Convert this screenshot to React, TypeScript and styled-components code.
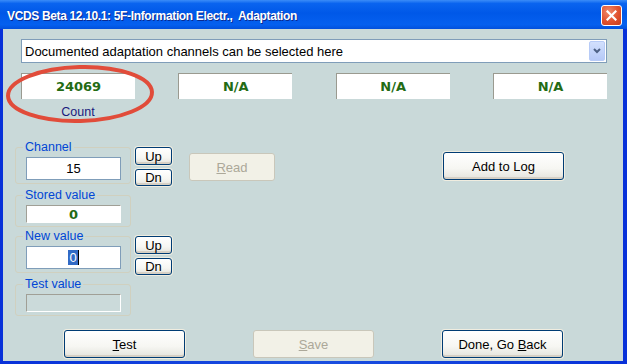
import * as React from "react";
import styled, { createGlobalStyle } from "styled-components";

const GlobalStyle = createGlobalStyle`
  html, body {
    margin: 0;
    padding: 0;
    overflow: hidden;
    background: #ffffff;
  }
`;

const Window = styled.div`
  position: relative;
  width: 627px;
  height: 364px;
  display: flex;
  flex-direction: column;
  background: linear-gradient(to right, #0831d9 0%, #1a4fe0 50%, #0831d9 100%);
  font-family: "Liberation Sans", Arial, sans-serif;
  overflow: hidden;
`;

const TitleBar = styled.div`
  height: 29px;
  flex: 0 0 29px;
  display: flex;
  align-items: center;
  justify-content: space-between;
  padding: 0 5px 0 7px;
  box-sizing: border-box;
  background: linear-gradient(
    to bottom,
    #3b8cf8 0%,
    #0a64ef 12%,
    #0058e8 45%,
    #0560ef 85%,
    #0250dc 100%
  );
`;

const Title = styled.span`
  color: #ffffff;
  font-weight: bold;
  font-size: 12px;
  letter-spacing: -0.35px;
  padding-top: 2px;
  text-shadow: 1px 1px 0 #0b2a8f;
  white-space: pre;
`;

const CloseButton = styled.div`
  width: 21px;
  height: 21px;
  box-sizing: border-box;
  border: 1px solid #ffffff;
  border-radius: 3px;
  background: radial-gradient(circle at 35% 30%, #f08a6c 0%, #e0512e 55%, #c73c1c 100%);
  display: flex;
  align-items: center;
  justify-content: center;
  margin-top: 2px;
`;

const Client = styled.div`
  flex: 1;
  margin: 0 4px 3px 3px;
  background: #c9d9d9;
  display: flex;
  flex-direction: column;
`;

const TopSection = styled.div`
  padding: 10px 16px 0 18px;
`;

const Combo = styled.div`
  height: 24px;
  box-sizing: border-box;
  border: 1px solid #7f9db9;
  background: #ffffff;
  display: flex;
  align-items: center;
  justify-content: space-between;
  padding: 0 1px 0 3px;
  font-size: 13px;
  color: #000000;
`;

const ComboArrow = styled.div`
  width: 16px;
  height: 20px;
  box-sizing: border-box;
  border: 1px solid #b7cbf7;
  border-radius: 2px;
  background: linear-gradient(to bottom, #d2e0fd 0%, #b6c9f7 100%);
  display: flex;
  align-items: center;
  justify-content: center;
`;

const DisplayRow = styled.div`
  display: flex;
  justify-content: space-between;
  margin-top: 10px;
`;

const DisplayCell = styled.div`
  width: 114px;
  display: flex;
  flex-direction: column;
  align-items: center;
`;

const DisplayBox = styled.div`
  width: 100%;
  height: 26px;
  box-sizing: border-box;
  background: #ffffff;
  border-top: 1px solid #9a9a90;
  border-left: 1px solid #9a9a90;
  display: flex;
  align-items: center;
  justify-content: center;
  font-family: "DejaVu Sans", Verdana, sans-serif;
  font-weight: bold;
  font-size: 13px;
  color: #236b14;
`;

const CountLabel = styled.div`
  margin-top: 5px;
  line-height: 16px;
  font-size: 12.5px;
  color: #19197c;
`;

const Controls = styled.div`
  display: flex;
  align-items: flex-start;
  margin-top: 20px;
  padding-left: 12px;
`;

const LeftColumn = styled.div`
  display: flex;
  flex-direction: column;
  gap: 2px;
`;

const GroupRow = styled.div`
  display: flex;
  align-items: flex-start;
`;

const GroupBox = styled.fieldset`
  width: 116px;
  box-sizing: border-box;
  margin: 0;
  padding: 0 8px 3px 10px;
  min-width: 0;
  border: 1px solid #d0d0bf;
  border-radius: 3px;
`;

const Legend = styled.legend`
  margin-left: -3px;
  padding: 0 2px;
  font-size: 12.5px;
  line-height: 14px;
  color: #0046d5;
`;

const Field = styled.div<{ $kind: "edit" | "static" | "disabled"; $tall?: boolean }>`
  margin-top: 3px;
  width: 95px;
  height: ${p => (p.$tall ? 23 : 18)}px;
  box-sizing: border-box;
  display: flex;
  align-items: center;
  justify-content: center;
  font-size: 13px;
  color: #000000;
  background: ${p => (p.$kind === "disabled" ? "#cbdada" : "#ffffff")};
  ${p =>
    p.$kind === "edit"
      ? "border: 1px solid #7f9db9;"
      : `border-top: 1px solid #a09f96;
         border-left: 1px solid #a09f96;
         border-right: 1px solid #ffffff;
         border-bottom: 1px solid #ffffff;`}
`;

const StoredValue = styled.span`
  font-family: "DejaVu Sans", Verdana, sans-serif;
  font-weight: bold;
  font-size: 13px;
  color: #236b14;
`;

const Selected = styled.span`
  background: #316ac5;
  color: #ffffff;
  padding: 0 1px;
  line-height: 15px;
  border-right: 1px solid #000000;
`;

const Stack = styled.div`
  display: flex;
  flex-direction: column;
  gap: 4px;
  margin-left: 4px;
  margin-top: 7px;
`;

const Button = styled.button<{ $w: number; $h: number }>`
  width: ${p => p.$w}px;
  height: ${p => p.$h}px;
  box-sizing: border-box;
  padding: 0;
  font-family: "Liberation Sans", Arial, sans-serif;
  font-size: 13px;
  color: #000000;
  border: 1px solid #003c74;
  border-radius: 3px;
  background: linear-gradient(to bottom, #ffffff 0%, #f6f6f2 60%, #e4e3dc 100%);
  box-shadow: inset 0 -2px 0 #d6d0c5, 0 0 0 1px #f0ede0;
  cursor: default;

  &:disabled {
    color: #aca899;
    border-color: #c9c7ba;
    background: #f2f1e7;
    box-shadow: none;
  }
`;

const ReadButton = styled(Button)`
  margin-left: 17px;
  margin-top: 13px;
`;

const LogButton = styled(Button)`
  margin-left: 168px;
  margin-top: 12px;
`;

const BottomBar = styled.div`
  margin-top: auto;
  display: flex;
  gap: 68px;
  padding: 0 0 3px 61px;
`;

const Ellipse = styled.svg`
  position: absolute;
  left: 5px;
  top: 64px;
  pointer-events: none;
`;

export default function App() {
  return (
    <>
      <GlobalStyle />
      <Window>
        <TitleBar>
          <Title>VCDS Beta 12.10.1: 5F-Information Electr.,  Adaptation</Title>
          <CloseButton>
            <svg width="11" height="11" viewBox="0 0 11 11">
              <path d="M1.5 1.5 L9.5 9.5 M9.5 1.5 L1.5 9.5" stroke="#ffffff" strokeWidth="2.2" strokeLinecap="square" />
            </svg>
          </CloseButton>
        </TitleBar>
        <Client>
          <TopSection>
            <Combo>
              <span>Documented adaptation channels can be selected here</span>
              <ComboArrow>
                <svg width="8" height="6" viewBox="0 0 8 6">
                  <path d="M1 1 L4 4 L7 1" stroke="#4d6185" strokeWidth="2" fill="none" />
                </svg>
              </ComboArrow>
            </Combo>
            <DisplayRow>
              <DisplayCell>
                <DisplayBox>24069</DisplayBox>
                <CountLabel>Count</CountLabel>
              </DisplayCell>
              <DisplayCell>
                <DisplayBox>N/A</DisplayBox>
              </DisplayCell>
              <DisplayCell>
                <DisplayBox>N/A</DisplayBox>
              </DisplayCell>
              <DisplayCell>
                <DisplayBox>N/A</DisplayBox>
              </DisplayCell>
            </DisplayRow>
          </TopSection>

          <Controls>
            <LeftColumn>
              <GroupRow>
                <GroupBox>
                  <Legend>Channel</Legend>
                  <Field $kind="edit" $tall>15</Field>
                </GroupBox>
                <Stack>
                  <Button $w={37} $h={18}>Up</Button>
                  <Button $w={37} $h={17}>Dn</Button>
                </Stack>
              </GroupRow>
              <GroupRow>
                <GroupBox>
                  <Legend>Stored value</Legend>
                  <Field $kind="static">
                    <StoredValue>0</StoredValue>
                  </Field>
                </GroupBox>
              </GroupRow>
              <GroupRow>
                <GroupBox>
                  <Legend>New value</Legend>
                  <Field $kind="edit" $tall>
                    <Selected>0</Selected>
                  </Field>
                </GroupBox>
                <Stack>
                  <Button $w={37} $h={18}>Up</Button>
                  <Button $w={37} $h={17}>Dn</Button>
                </Stack>
              </GroupRow>
              <GroupRow>
                <GroupBox>
                  <Legend>Test value</Legend>
                  <Field $kind="disabled" />
                </GroupBox>
              </GroupRow>
            </LeftColumn>
            <ReadButton $w={86} $h={28} disabled>
              <u>R</u>ead
            </ReadButton>
            <LogButton $w={121} $h={28}>Add to Log</LogButton>
          </Controls>

          <BottomBar>
            <Button $w={121} $h={28}>
              <u>T</u>est
            </Button>
            <Button $w={121} $h={28} disabled>
              <u>S</u>ave
            </Button>
            <Button $w={121} $h={28}>
              Done, Go <u>B</u>ack
            </Button>
          </BottomBar>
        </Client>

        <Ellipse width="152" height="62" viewBox="0 0 152 62">
          <ellipse cx="75" cy="30" rx="72" ry="27" fill="none" stroke="#e14c3a" strokeWidth="4" transform="rotate(-1.5 75 30)" />
        </Ellipse>
      </Window>
    </>
  );
}
